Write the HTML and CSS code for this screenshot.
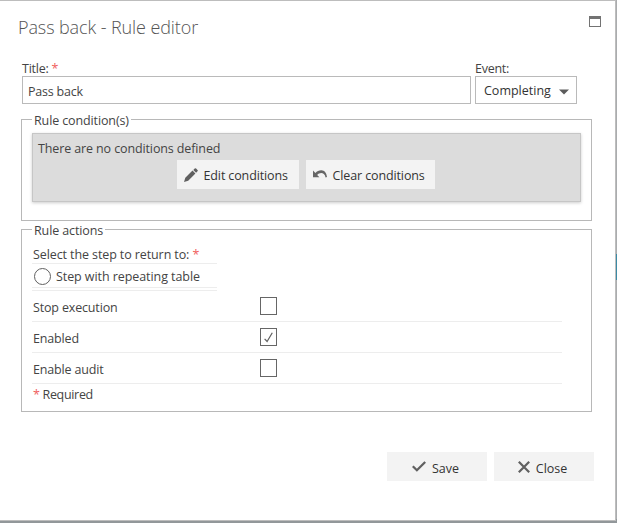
FILE: index.html
```html
<!DOCTYPE html>
<html lang="en">
<head>
<meta charset="utf-8">
<title>Pass back - Rule editor</title>
<link rel="stylesheet" href="styles.css">
</head>
<body>
<main class="dialog">
  <header class="header">
    <h1 class="heading">Pass back - Rule editor</h1>
    <svg class="maximize" width="12" height="11" viewBox="0 0 12 11"><path fill="#737373" fill-rule="evenodd" d="M0 0h12v11H0zM1 3v7h10V3z"/></svg>
  </header>
  <div class="fields">
    <div class="field field-title"><label>Title: <span class="star">*</span></label><div class="control">Pass back</div></div>
    <div class="field field-event"><label>Event:</label><div class="control select"><span>Completing</span><svg width="10" height="6" viewBox="0 0 10 6"><path fill="#5c5c5c" d="M0 .5h10L5 5.5z"/></svg></div></div>
  </div>
  <section class="group conditions">
    <h2 class="legend">Rule condition(s)</h2>
    <div class="panel">
      <p class="empty">There are no conditions defined</p>
      <div class="panel-buttons">
        <button class="btn edit"><svg width="14" height="14" viewBox="0 0 14 14"><path fill="#606060" d="M0 14l1.3-4.2 7.2-7.2 2.9 2.9-7.2 7.2zM9.3 1.9L10.7.5q.7-.7 1.4 0l1.4 1.4q.7.7 0 1.4L12.1 4.7z"/></svg><span>Edit conditions</span></button>
        <button class="btn clear"><svg width="14" height="8" viewBox="0 0 14 8"><path fill="#666" d="M0 .5v6.7h6.4L4.2 5C6.6 2.4 11.3 1.9 12.6 7.4l1.4-.4C13.4 2.6 11.4.5 8.500.3 6.2.2 4 1.2 2.4 3z"/></svg><span>Clear conditions</span></button>
      </div>
    </div>
  </section>
  <section class="group actions">
    <h2 class="legend">Rule actions</h2>
    <div class="steps">
      <p class="steps-label">Select the step to return to: <span class="star">*</span></p>
      <div class="step"><span class="radio"></span><span class="step-name">Step with repeating table</span></div>
    </div>
    <div class="row"><span>Stop execution</span><span class="check"></span></div>
    <div class="row"><span>Enabled</span><span class="check"><svg width="9" height="11" viewBox="0 0 9 11"><path fill="none" stroke="#606060" stroke-width="1.2" d="M.6 6.8L3.1 9.5 8.3.8"/></svg></span></div>
    <div class="row"><span>Enable audit</span><span class="check"></span></div>
    <p class="required"><span class="star">*</span> Required</p>
  </section>
  <footer class="footer">
    <button class="btn save"><svg width="14" height="11" viewBox="0 0 14 11"><path fill="none" stroke="#606060" stroke-width="2.3" d="M.8 5.2L4.9 9.2 13.2 1"/></svg><span>Save</span></button>
    <button class="btn close"><svg width="12" height="12" viewBox="0 0 12 12"><path fill="none" stroke="#606060" stroke-width="2.2" d="M.8.8l10.4 10.4M11.2.8L.8 11.2"/></svg><span>Close</span></button>
  </footer>
</main>
</body>
</html>
```
FILE: styles.css
```css
* { box-sizing: border-box; }
body {
  margin: 0;
  width: 617px;
  height: 523px;
  overflow: hidden;
  background: linear-gradient(to bottom, #aaacae 0 254px, #3b8ba5 254px 280px, #aaacae 280px 519px, #92979a 519px);
  font: 12.5px/18px "Open Sans", "Noto Sans", sans-serif;
  letter-spacing: -0.08px;
  color: #444;
}
h1, h2, p { margin: 0; font-weight: normal; }
svg { display: block; flex: none; }
.dialog {
  width: 616px;
  height: 521px;
  padding: 0 20px 0 21px;
  background: #fff;
  border: solid #bdbdbd;
  border-width: 1px 1px 1px 0;
}
.header {
  display: flex;
  justify-content: space-between;
  height: 59px;
  padding: 15px 0 0;
  margin: 0 -6px 0 -3px;
}
.heading {
  font-size: 18px;
  line-height: 22px;
  font-weight: 300;
  color: #555;
  white-space: nowrap;
  letter-spacing: -0.1px;
}
.fields { display: flex; gap: 4px; padding-left: 1px; }
.field label { display: block; height: 16px; line-height: 17px; letter-spacing: -0.25px; }
.field-title { width: 449px; }
.field-event { width: 102px; }
.star { color: #f06060; }
.control {
  height: 28px;
  padding: 0 5px;
  border: 1px solid #bababa;
  line-height: 29px;
  letter-spacing: -0.22px;
}
.select {
  display: flex;
  justify-content: space-between;
  align-items: center;
  padding: 0 7px 0 8px;
  line-height: 26px;
  color: #333;
  letter-spacing: 0;
}
.select span { padding-top: 2px; }
.select svg { margin-top: 4px; }
.group {
  width: 571px;
  padding: 0 10px;
  border: 1px solid #b8b8b8;
}
.conditions { height: 102px; margin-top: 15px; }
.actions { height: 183px; margin-top: 8px; }
.legend {
  width: fit-content;
  height: 18px;
  margin: -9px 0 0 0;
  padding: 0 2px;
  background: #fff;
  font-size: 12.5px;
  line-height: 20px;
  white-space: nowrap;
  letter-spacing: -0.12px;
}
.panel {
  width: 549px;
  height: 70px;
  margin-top: 4px;
  padding: 5px;
  background: #dcdcdc;
  border: 1px solid #c6c6c6;
  box-shadow: 0 1px 3px rgba(0, 0, 0, .2);
}
.panel { height: 69px; }
.empty { height: 21px; line-height: 20px; letter-spacing: -0.12px; }
.panel-buttons { display: flex; gap: 7px; margin-left: 139px; }
.btn {
  display: flex;
  align-items: center;
  height: 29px;
  padding: 0;
  border: 0;
  background: #f3f3f3;
  color: #333;
  font: inherit;
  letter-spacing: -0.12px;
  line-height: 18px;
  white-space: nowrap;
}
.btn span { padding-top: 2px; }
.edit { width: 122px; padding-left: 7px; gap: 5.5px; }
.clear { width: 129px; padding-left: 7px; gap: 5.5px; }
.clear svg { margin-top: -2px; }
.steps {
  width: 185px;
  height: 45px;
  margin-top: 7px;
  border-bottom: 1px solid #ededed;
}
.steps-label { height: 17px; line-height: 18px; padding-left: 1px; letter-spacing: -0.1px; }
.step {
  display: flex;
  align-items: center;
  height: 25px;
  padding-left: 2px;
  gap: 5px;
  border: solid #ededed;
  border-width: 1px 0;
  letter-spacing: -0.07px;
}
.step-name { padding-top: 3px; }
.radio { width: 17px; height: 17px; margin-top: 2px; border: 1px solid #606060; border-radius: 50%; }
.row {
  display: flex;
  align-items: center;
  width: 530px;
  height: 31px;
  padding-left: 1px;
  border-bottom: 1px solid #ededed;
  letter-spacing: -0.16px;
}
.row > span:first-child { width: 227px; padding-top: 3px; }
.check {
  display: flex;
  align-items: center;
  justify-content: center;
  width: 17px;
  height: 18px;
  border: 1px solid #666;
}
.required { padding: 2px 0 0 1px; letter-spacing: -0.32px; }
.footer { display: flex; gap: 7px; margin: 40px 0 0 366px; }
.save, .close { width: 100px; justify-content: center; gap: 6px; padding-right: 3px; }
.save span, .close span { padding-top: 4px; letter-spacing: -0.05px; }
```
